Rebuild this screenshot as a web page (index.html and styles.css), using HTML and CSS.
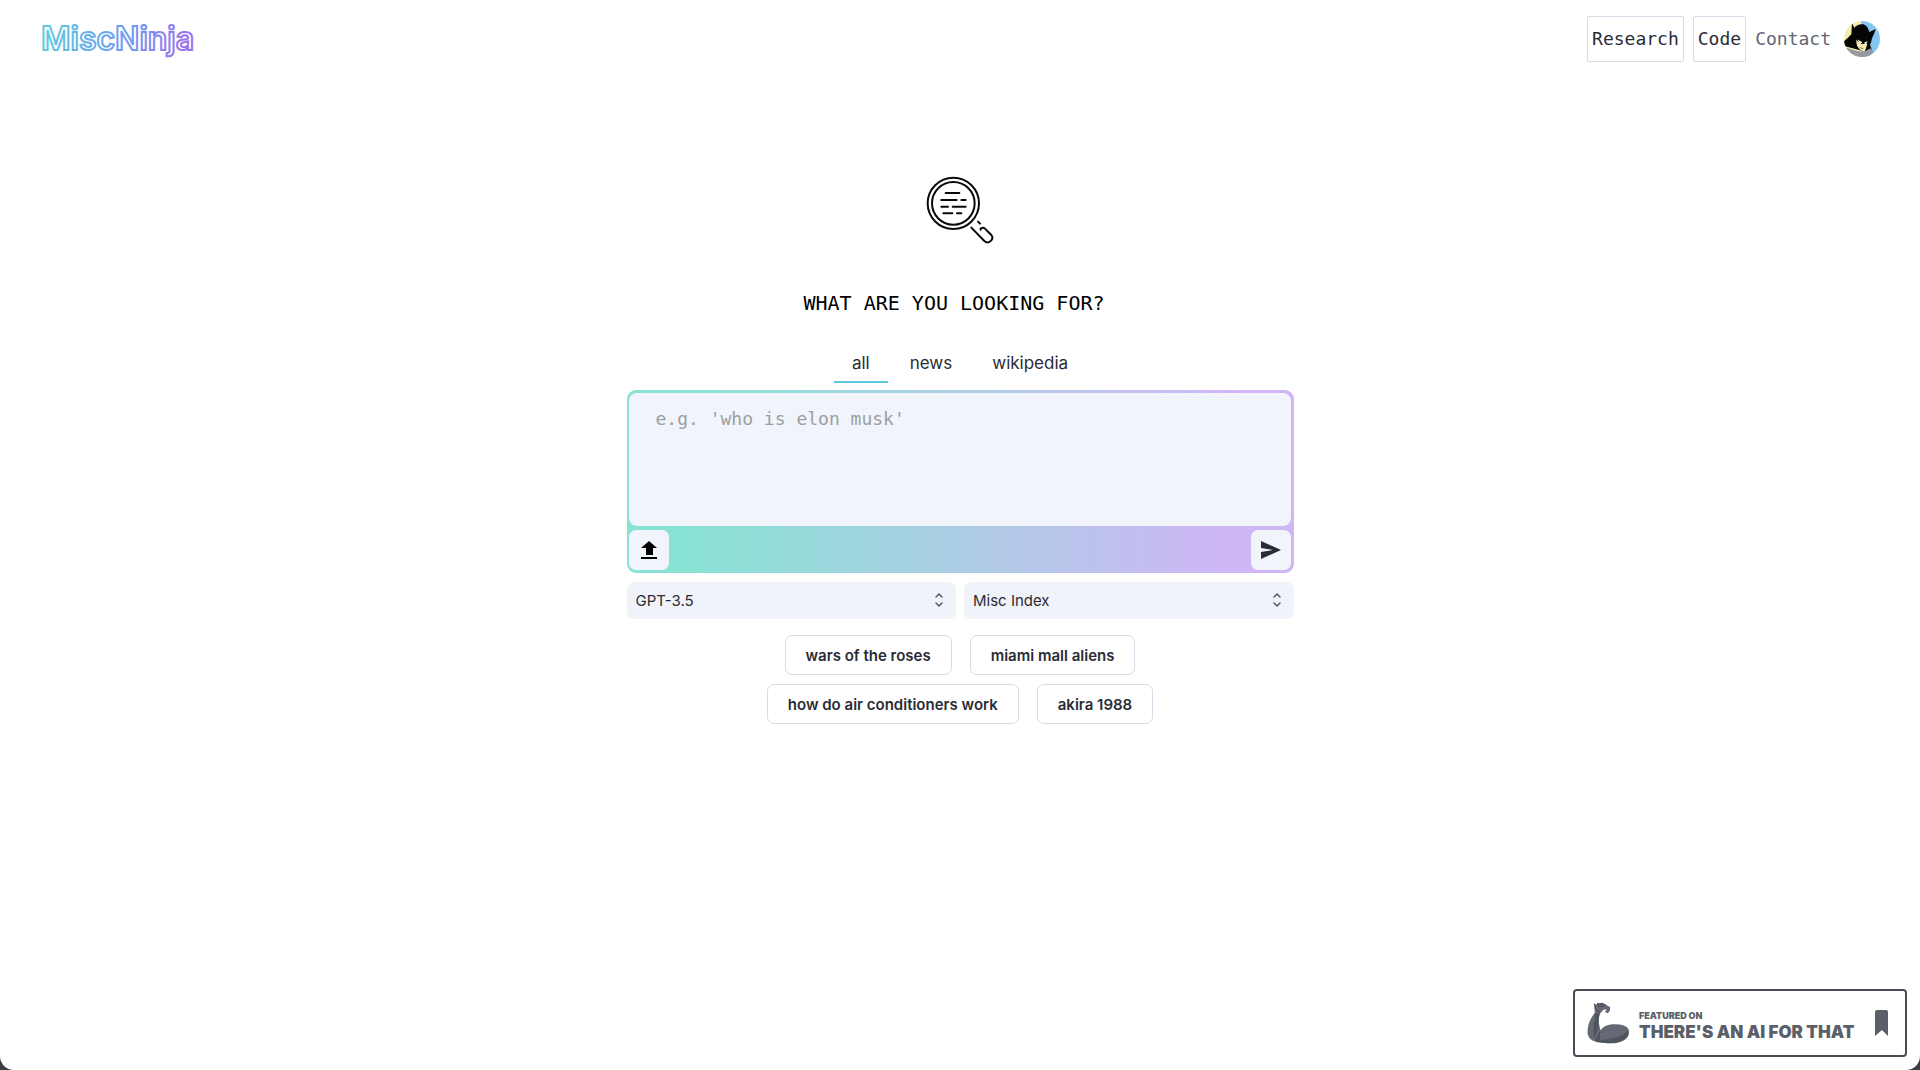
FILE: index.html
```
<!DOCTYPE html>
<html lang="en">

<head>
    <meta charset="UTF-8">
    <meta name="viewport" content="width=device-width, initial-scale=1.0">
    <title>MiscNinja</title>
    <link rel="stylesheet" href="styles.css">
</head>

<body>
    <div class="page">
        <header class="header">
            <a href="#" class="logo" aria-label="MiscNinja">
                <svg width="170" height="42" viewBox="0 0 170 42">
                    <defs>
                        <linearGradient id="logo-fill" gradientUnits="userSpaceOnUse" x1="0" y1="0" x2="150" y2="40">
                            <stop offset="0" stop-color="#5fd0dc" />
                            <stop offset="0.55" stop-color="#6f9df0" />
                            <stop offset="1" stop-color="#a070ee" />
                        </linearGradient>
                    </defs>
                    <text x="1" y="32" class="logo-text">MiscNinja</text>
                </svg>
            </a>
            <nav class="nav">
                <a href="#" class="nav-box">Research</a>
                <a href="#" class="nav-box">Code</a>
                <a href="#" class="nav-link">Contact</a>
                <button type="button" class="avatar" aria-label="Account">
                    <svg width="36" height="36" viewBox="12 27 108 108">
                        <clipPath id="avatar-clip">
                            <circle cx="66" cy="81" r="54" />
                        </clipPath>
                        <g clip-path="url(#avatar-clip)">
                            <path fill="#f7eeae" d="M12 27H66V135H12z" />
                            <path fill="#85c5f1" d="M64 27H120V135H64z" />
                            <path fill="#050505" d="M36 34L43 47Q54 34 70 37Q83 41 88 60L107 51Q103 66 96 79Q94 92 90 98L98 120L66 116L12 102V88Q25 77 34 67z" />
                            <path fill="#f7eeae" d="M48 84L65 96L82 96L75 118Q60 118 51 101z" />
                            <path fill="#fff" d="M51 82L67 91L61 95zM71 93L83 87L78 97z" />
                            <path fill="#555" d="M57 106L70 108L68 111z" />
                            <path fill="#979aa2" d="M12 104Q35 112 51 117Q75 122 92 109L100 120L88 140H12z" />
                        </g>
                    </svg>
                </button>
            </nav>
        </header>

        <main class="main">
            <svg class="search-icon" width="68" height="68" viewBox="78 48 204 204" fill="none" stroke="#0a0a0c" stroke-width="6" stroke-linecap="round">
                <circle cx="160" cy="130" r="77" />
                <circle cx="160" cy="130" r="64" />
                <path d="M137 99H178M124 120H170M184 120H197M124 140H144M158 140H197M130 160H157M171 160H184" />
                <path d="M214 203L253 243Q262 251 271 244Q282 235 274 225L254 205Q250 201 242 206V209M234 185L240 191" />
            </svg>
            <h1 class="title">WHAT ARE YOU LOOKING FOR?</h1>

            <div class="tabs" role="tablist">
                <button type="button" class="tab active" role="tab" aria-selected="true">all</button>
                <button type="button" class="tab" role="tab" aria-selected="false">news</button>
                <button type="button" class="tab" role="tab" aria-selected="false">wikipedia</button>
            </div>

            <form class="search">
                <div class="search-box">
                    <textarea class="query" aria-label="Search" placeholder="e.g. 'who is elon musk'"></textarea>
                    <div class="actions">
                        <button type="button" class="action" aria-label="Upload">
                            <svg width="18" height="20" viewBox="0 0 18 20">
                                <path d="M9 1L17 8H13V15H6V8H1zM1 17H17V19H1z" fill="#000" />
                            </svg>
                        </button>
                        <button type="submit" class="action" aria-label="Send">
                            <svg width="20" height="18" viewBox="0 0 20 18">
                                <path d="M0 0L20 9L0 18V11L12 9L0 7z" fill="#2a2c33" />
                            </svg>
                        </button>
                    </div>
                </div>

                <div class="selects">
                    <div class="select-wrap">
                        <select aria-label="Model">
                            <option>GPT-3.5</option>
                        </select>
                        <svg class="chevrons" width="10" height="16" viewBox="0 0 10 16">
                            <path d="M2 5L5 2L8 5M2 11L5 14L8 11" />
                        </svg>
                    </div>
                    <div class="select-wrap">
                        <select aria-label="Index">
                            <option>Misc Index</option>
                        </select>
                        <svg class="chevrons" width="10" height="16" viewBox="0 0 10 16">
                            <path d="M2 5L5 2L8 5M2 11L5 14L8 11" />
                        </svg>
                    </div>
                </div>
            </form>

            <div class="suggestions">
                <button type="button" class="chip">wars of the roses</button>
                <button type="button" class="chip">miami mall aliens</button>
                <button type="button" class="chip">how do air conditioners work</button>
                <button type="button" class="chip">akira 1988</button>
            </div>
        </main>

        <a href="#" class="badge">
            <svg width="42" height="42" viewBox="80 95 126 126">
                <path fill="#646973" d="M102 100L108 103L112 98L121 98L128 97L136 103L149 110V120L143 129L134 125L139 117L129 118L119 130Q114 145 116 160L120 180Q132 164 155 162Q190 159 203 174Q211 190 198 205Q180 220 143 219L110 215Q86 211 82 190Q79 158 103 128z" />
                <path fill="#50545e" d="M103 128L118 131Q112 147 115 170L102 206Q95 174 105 143zM119 191L107 215L143 219Q184 219 202 198Q208 188 200 179Q190 204 119 209z" />
                <path d="M102 100L106 116L119 126M112 98L116 110M121 98L124 109L136 103M120 185L106 211" fill="none" stroke="#41454e" stroke-width="3" />
            </svg>
            <span class="badge-text">
                <span class="badge-small">FEATURED ON</span>
                <span class="badge-large">THERE'S AN AI FOR THAT</span>
            </span>
            <svg class="bookmark" width="13" height="26" viewBox="0 0 13 26">
                <path d="M2 0H11Q13 0 13 2V26L7 20L0 26V2Q0 0 2 0z" fill="#5b5f69" />
            </svg>
        </a>
    </div>
</body>

</html>
```
FILE: styles.css
```
* {
    box-sizing: border-box;
    margin: 0;
    padding: 0;
}

body {
    background-color: #3a3c44;
    font-family: Inter, sans-serif;
    color: #2a2c35;
}

button {
    border: none;
    background: none;
    font-family: inherit;
    color: inherit;
    cursor: pointer;
}

a {
    text-decoration: none;
    color: inherit;
}

svg {
    display: block;
}

.page {
    display: flex;
    flex-direction: column;
    min-height: 100vh;
    background-color: #fff;
    border-radius: 0 0 14px 14px;
}

.header {
    display: flex;
    justify-content: space-between;
    align-items: center;
    padding: 16px 40px;
}

.logo-text {
    font-family: Inter, sans-serif;
    font-size: 32px;
    font-weight: 600;
    fill: #fff;
    stroke: url(#logo-fill);
    stroke-width: 2px;
}

.nav {
    display: flex;
    align-items: center;
    gap: 9px;
    font-family: "DejaVu Sans Mono", monospace;
    font-size: 18px;
    line-height: 28px;
}

.nav-box {
    padding: 8px 4px;
    border: 1px solid #d5dbe6;
    border-radius: 2px;
}

.nav-link {
    color: #62666f;
}

.avatar {
    margin-left: 4px;
    border-radius: 50%;
}

.main {
    display: flex;
    flex-direction: column;
    align-items: center;
    flex: 1;
    padding-top: 98px;
}

.title {
    margin-top: 45px;
    padding-right: 12px;
    font-family: "DejaVu Sans Mono", monospace;
    font-size: 20px;
    font-weight: 400;
    line-height: 28px;
    color: #000;
}

.tabs {
    display: flex;
    gap: 4px;
    margin: 29px 0 7px;
}

.tab {
    padding: 5px 18px 6px;
    border-bottom: 2px solid transparent;
    font-size: 17px;
    line-height: 24px;
}

.tab.active {
    border-color: #5bc8de;
}

.search {
    width: 100%;
    max-width: 667px;
}

.search-box {
    padding: 3px 3px 3px 2px;
    border-radius: 9px;
    background: linear-gradient(90deg, #88e3d4 8%, #accde4 50%, #d0b5f7 92%);
}

.query {
    display: block;
    width: 100%;
    height: 133px;
    padding: 12px 27px;
    border: none;
    border-radius: 8px;
    outline: none;
    resize: none;
    background-color: #f1f4fa;
    font-family: "DejaVu Sans Mono", monospace;
    font-size: 18px;
    line-height: 28px;
}

.query::placeholder {
    color: #9b9ea3;
}

.actions {
    display: flex;
    justify-content: space-between;
    padding-top: 4px;
}

.action {
    display: flex;
    justify-content: center;
    align-items: center;
    width: 40px;
    height: 40px;
    border-radius: 7px;
    background-color: #f1f4fa;
}

.selects {
    display: flex;
    gap: 8px;
    margin-top: 9px;
}

.select-wrap {
    position: relative;
    flex: 1;
}

.select-wrap select {
    width: 100%;
    height: 37px;
    padding: 0 9px;
    border: none;
    border-radius: 7px;
    appearance: none;
    background-color: #f0f3f9;
    color: #2a2c35;
    font-family: inherit;
    font-size: 15px;
}

.chevrons {
    position: absolute;
    top: 10px;
    right: 12px;
    fill: none;
    stroke: #555962;
    stroke-width: 1.5px;
    stroke-linecap: round;
    pointer-events: none;
}

.suggestions {
    display: flex;
    flex-wrap: wrap;
    justify-content: center;
    gap: 9px 18px;
    max-width: 480px;
    margin-top: 16px;
}

.chip {
    height: 40px;
    padding: 0 20px;
    border: 1px solid #d5dbe6;
    border-radius: 7px;
    font-size: 15px;
    font-weight: 600;
}

.badge {
    display: flex;
    align-items: center;
    align-self: flex-end;
    width: 334px;
    margin: 0 13px 13px 0;
    padding: 11px 17px 11px 12px;
    border: 2px solid #484c56;
    border-radius: 4px;
    color: #5b5f69;
}

.badge-text {
    display: flex;
    flex-direction: column;
    margin-left: 10px;
    padding-top: 6px;
    font-weight: 900;
    white-space: nowrap;
}

.badge-small {
    font-size: 9px;
    line-height: 12px;
}

.badge-large {
    font-size: 17px;
    line-height: 20px;
}

.bookmark {
    margin-left: auto;
}
```
